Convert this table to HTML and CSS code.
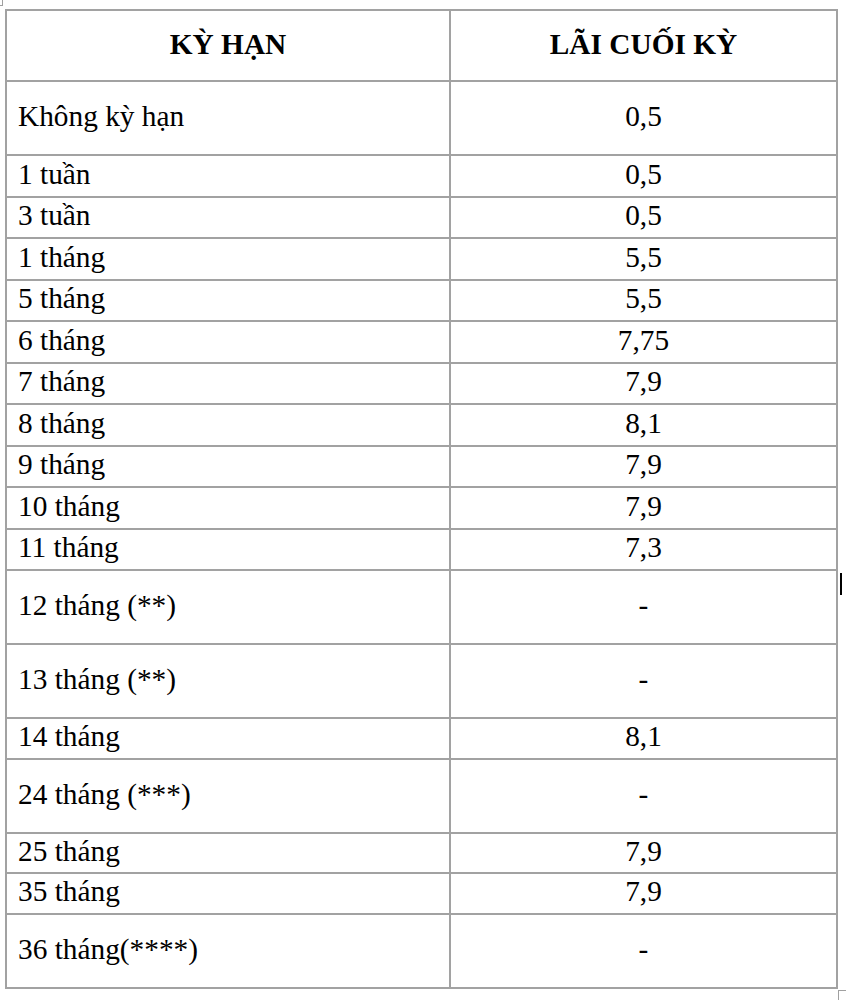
FILE: index.html
```html
<!DOCTYPE html>
<html lang="vi">
<head>
<meta charset="utf-8">
<title>Lãi suất</title>
<link rel="stylesheet" href="styles.css">
</head>
<body>
<div class="page">
  <span class="mark mark-tl"></span>
  <table class="rates">
    <thead>
      <tr class="r-head">
        <th>KỲ HẠN</th>
        <th>LÃI CUỐI KỲ</th>
      </tr>
    </thead>
    <tbody>
      <tr class="r-tall"><td>Không kỳ hạn</td><td>0,5</td></tr>
      <tr class="r"><td>1 tuần</td><td>0,5</td></tr>
      <tr class="r"><td>3 tuần</td><td>0,5</td></tr>
      <tr class="r"><td>1 tháng</td><td>5,5</td></tr>
      <tr class="r"><td>5 tháng</td><td>5,5</td></tr>
      <tr class="r"><td>6 tháng</td><td>7,75</td></tr>
      <tr class="r"><td>7 tháng</td><td>7,9</td></tr>
      <tr class="r"><td>8 tháng</td><td>8,1</td></tr>
      <tr class="r"><td>9 tháng</td><td>7,9</td></tr>
      <tr class="r"><td>10 tháng</td><td>7,9</td></tr>
      <tr class="r"><td>11 tháng</td><td>7,3</td></tr>
      <tr class="r-tall"><td>12 tháng (**)</td><td>-</td></tr>
      <tr class="r-tall"><td>13 tháng (**)</td><td>-</td></tr>
      <tr class="r-sm"><td>14 tháng</td><td>8,1</td></tr>
      <tr class="r-tall"><td>24 tháng (***)</td><td>-</td></tr>
      <tr class="r-sm"><td>25 tháng</td><td>7,9</td></tr>
      <tr class="r-sm"><td>35 tháng</td><td>7,9</td></tr>
      <tr class="r-tall"><td>36 tháng(****)</td><td>-</td></tr>
    </tbody>
  </table>
  <span class="cursor"></span>
  <span class="mark mark-br"></span>
</div>
</body>
</html>
```
FILE: styles.css
```css
html, body {
  margin: 0;
  padding: 0;
  background: #ffffff;
}

.page {
  position: relative;
  width: 846px;
  height: 1000px;
  padding: 9px 0 0 5px;
  box-sizing: border-box;
  font-family: "Liberation Serif", "Times New Roman", serif;
  color: #000000;
}

.rates {
  border-collapse: collapse;
  width: 833px;
  table-layout: fixed;
}

.rates th,
.rates td {
  border: 2px solid #a2a2a2;
  font-size: 29.33px;
  line-height: 34px;
  padding: 0 0 4px 11px;
  vertical-align: middle;
}

.rates th {
  font-weight: bold;
  text-align: center;
  padding: 0 0 4px 0;
}

.rates th:first-child,
.rates td:first-child {
  width: 442px;
}

.rates td:last-child {
  text-align: center;
  padding: 0 0 4px 0;
}

.r-head {
  height: 71px;
}

.r-tall {
  height: 74px;
}

.r {
  height: 41.5px;
}

.r-sm {
  height: 40.5px;
}

.mark {
  position: absolute;
  width: 6px;
  height: 6px;
  border-color: #a0a0a0;
  border-style: solid;
  box-sizing: border-box;
}

.mark-tl {
  left: -3px;
  top: 0;
  border-width: 0 1.5px 1.5px 0;
}

.mark-br {
  left: 838px;
  top: 990px;
  width: 10px;
  height: 10px;
  border-width: 1.5px 0 0 1.5px;
}

.cursor {
  position: absolute;
  left: 840px;
  top: 573px;
  width: 2px;
  height: 22px;
  background: #000000;
}
```
